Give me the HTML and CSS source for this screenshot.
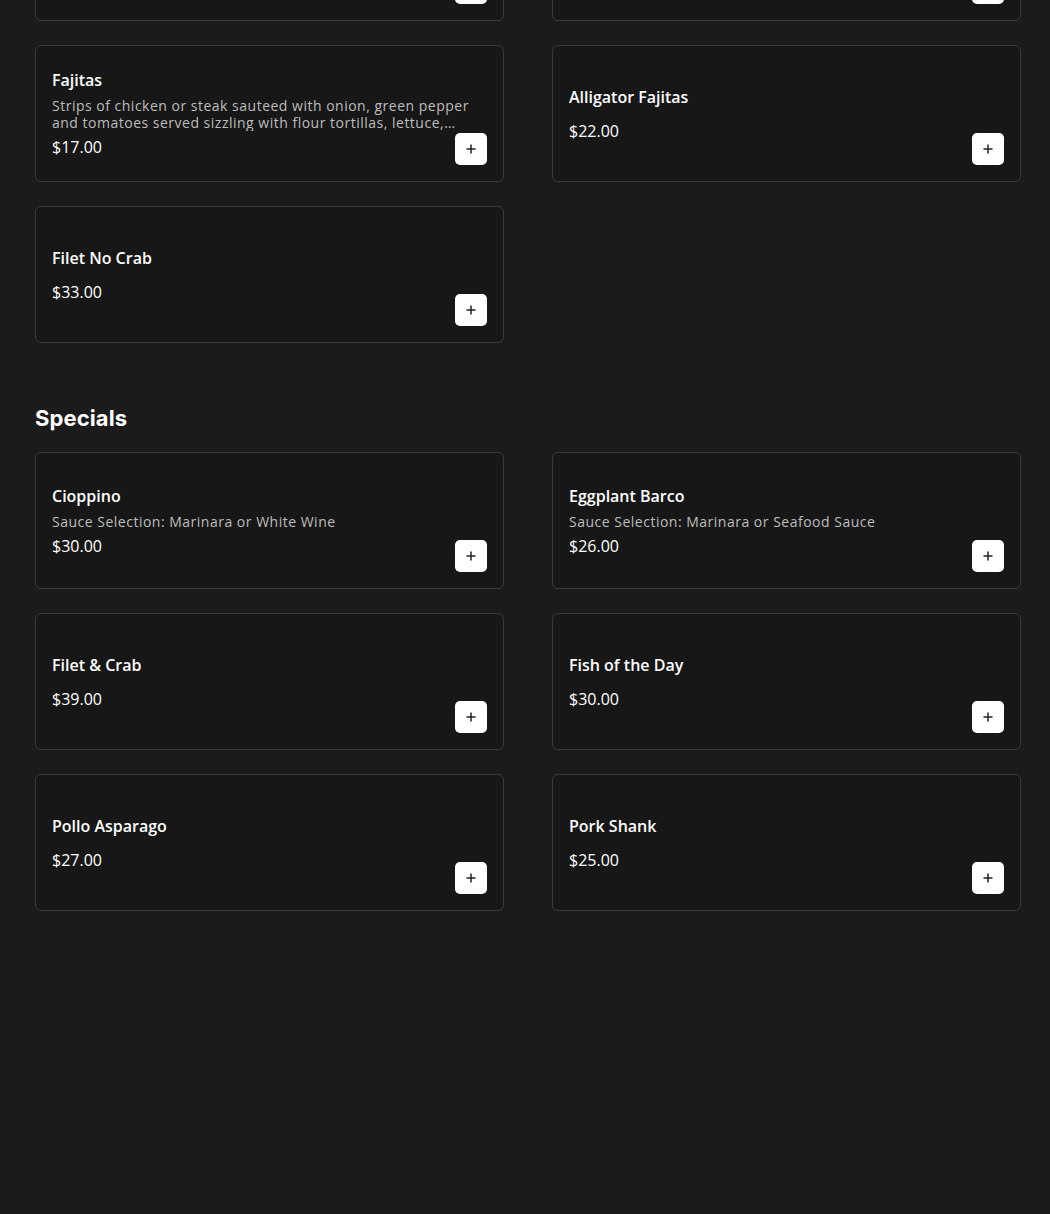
FILE: index.html
```html
<!DOCTYPE html>
<html>
<head>
<meta charset="utf-8">
<link rel="stylesheet" href="styles.css">
</head>
<body>
<main class="menu">
  <section class="section section-first">
    <div class="grid">
      <div class="card"><div class="info"><div class="title">Beef Fajitas</div><div class="price">$19.00</div></div><button class="add"><svg viewBox="0 0 12 12" width="12" height="12"><path d="M6 1.5v9M1.5 6h9" stroke="#222" stroke-width="1.5" fill="none"/></svg></button></div>
      <div class="card"><div class="info"><div class="title">Shrimp Fajitas</div><div class="price">$21.00</div></div><button class="add"><svg viewBox="0 0 12 12" width="12" height="12"><path d="M6 1.5v9M1.5 6h9" stroke="#222" stroke-width="1.5" fill="none"/></svg></button></div>
      <div class="card"><div class="info"><div class="title">Fajitas</div><div class="desc">Strips of chicken or steak sauteed with onion, green pepper and tomatoes served sizzling with flour tortillas, lettuce, and sour cream</div><div class="price">$17.00</div></div><button class="add"><svg viewBox="0 0 12 12" width="12" height="12"><path d="M6 1.5v9M1.5 6h9" stroke="#222" stroke-width="1.5" fill="none"/></svg></button></div>
      <div class="card"><div class="info"><div class="title">Alligator Fajitas</div><div class="price">$22.00</div></div><button class="add"><svg viewBox="0 0 12 12" width="12" height="12"><path d="M6 1.5v9M1.5 6h9" stroke="#222" stroke-width="1.5" fill="none"/></svg></button></div>
      <div class="card"><div class="info"><div class="title">Filet No Crab</div><div class="price">$33.00</div></div><button class="add"><svg viewBox="0 0 12 12" width="12" height="12"><path d="M6 1.5v9M1.5 6h9" stroke="#222" stroke-width="1.5" fill="none"/></svg></button></div>
    </div>
  </section>
  <section class="section">
    <h2 class="heading">Specials</h2>
    <div class="grid">
      <div class="card"><div class="info"><div class="title">Cioppino</div><div class="desc">Sauce Selection: Marinara or White Wine</div><div class="price">$30.00</div></div><button class="add"><svg viewBox="0 0 12 12" width="12" height="12"><path d="M6 1.5v9M1.5 6h9" stroke="#222" stroke-width="1.5" fill="none"/></svg></button></div>
      <div class="card"><div class="info"><div class="title">Eggplant Barco</div><div class="desc">Sauce Selection: Marinara or Seafood Sauce</div><div class="price">$26.00</div></div><button class="add"><svg viewBox="0 0 12 12" width="12" height="12"><path d="M6 1.5v9M1.5 6h9" stroke="#222" stroke-width="1.5" fill="none"/></svg></button></div>
      <div class="card"><div class="info"><div class="title">Filet &amp; Crab</div><div class="price">$39.00</div></div><button class="add"><svg viewBox="0 0 12 12" width="12" height="12"><path d="M6 1.5v9M1.5 6h9" stroke="#222" stroke-width="1.5" fill="none"/></svg></button></div>
      <div class="card"><div class="info"><div class="title">Fish of the Day</div><div class="price">$30.00</div></div><button class="add"><svg viewBox="0 0 12 12" width="12" height="12"><path d="M6 1.5v9M1.5 6h9" stroke="#222" stroke-width="1.5" fill="none"/></svg></button></div>
      <div class="card"><div class="info"><div class="title">Pollo Asparago</div><div class="price">$27.00</div></div><button class="add"><svg viewBox="0 0 12 12" width="12" height="12"><path d="M6 1.5v9M1.5 6h9" stroke="#222" stroke-width="1.5" fill="none"/></svg></button></div>
      <div class="card"><div class="info"><div class="title">Pork Shank</div><div class="price">$25.00</div></div><button class="add"><svg viewBox="0 0 12 12" width="12" height="12"><path d="M6 1.5v9M1.5 6h9" stroke="#222" stroke-width="1.5" fill="none"/></svg></button></div>
    </div>
  </section>
</main>
</body>
</html>
```

FILE: styles.css
```css
html, body {
  margin: 0;
  padding: 0;
  background: #1b1b1b;
  height: 100%;
  overflow: hidden;
}
body {
  font-family: "Open Sans", "Noto Sans", sans-serif;
  color: #fff;
}
.menu {
  padding: 0 29px 0 35px;
}
.section-first {
  margin-top: -116px;
}
.section {
  display: flex;
  flex-direction: column;
}
.heading {
  margin: 61px 0 20px;
  font-family: "Inter", sans-serif;
  font-size: 22px;
  line-height: 28px;
  font-weight: 700;
  letter-spacing: 0.1px;
}
.grid {
  display: grid;
  grid-template-columns: 469px 469px;
  column-gap: 48px;
  row-gap: 24px;
}
.card {
  box-sizing: border-box;
  height: 137px;
  background: #171717;
  border: 1px solid #3a3a3a;
  border-radius: 6px;
  padding: 16px;
  display: grid;
  grid-template-columns: 1fr;
  grid-template-rows: 1fr;
}
.info {
  grid-area: 1 / 1;
  align-self: center;
  min-width: 0;
  display: flex;
  flex-direction: column;
}
.title {
  font-size: 16px;
  line-height: 24px;
  font-weight: 600;
  margin-bottom: 1px;
}
.desc {
  font-size: 14px;
  line-height: 17px;
  letter-spacing: 0.5px;
  color: #bdbdbd;
  margin: 4px 14px 0 0;
  display: -webkit-box;
  -webkit-line-clamp: 2;
  -webkit-box-orient: vertical;
  overflow: hidden;
}
.price {
  font-size: 16px;
  line-height: 24px;
  margin-top: 9px;
}
.desc + .price {
  margin-top: 4px;
}
.add {
  grid-area: 1 / 1;
  justify-self: end;
  align-self: end;
  width: 32px;
  height: 32px;
  border: none;
  border-radius: 5px;
  background: #fff;
  display: flex;
  align-items: center;
  justify-content: center;
  padding: 0;
}
```
